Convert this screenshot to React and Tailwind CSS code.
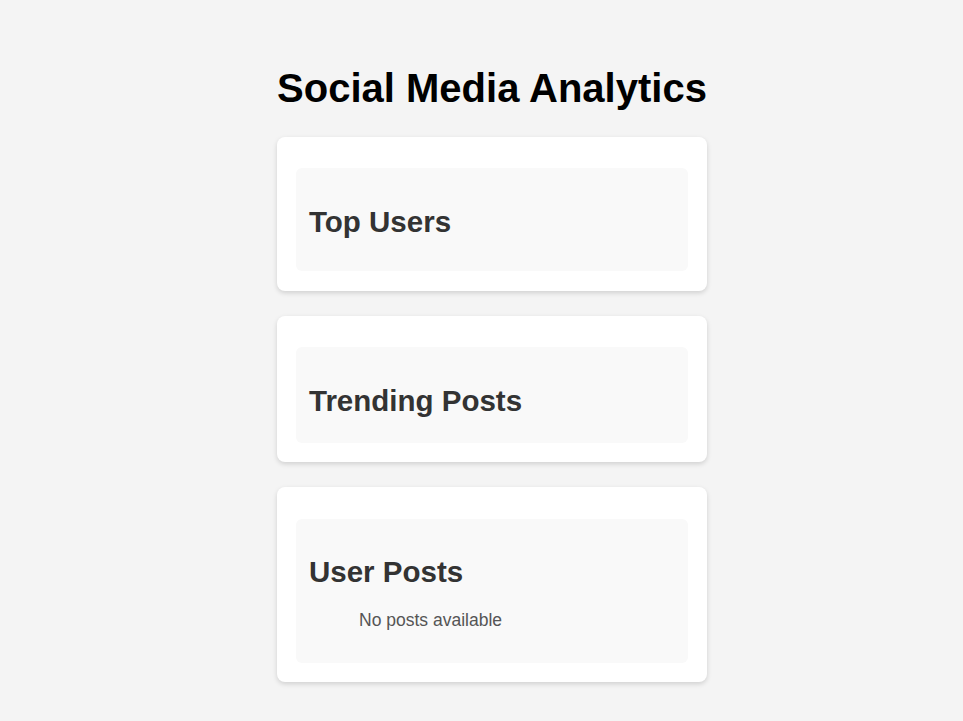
export default function App() {
  return (
    <div className="min-h-screen bg-[#f4f4f4] font-['Liberation_Sans',Arial,sans-serif]">
      <div className="flex justify-center pl-[21px] pt-[65px] pb-10">
        <div className="w-[430px]">
          <h1 className="text-center text-[40px] font-bold leading-[46px] text-black">
            Social Media Analytics
          </h1>

          <div className="mt-[26px] flex flex-col gap-[25px]">
            <section className="rounded-lg bg-white px-[19px] pt-[31px] pb-[20px] shadow-[0_2px_5px_rgba(0,0,0,0.15)]">
              <div className="rounded-md bg-[#f9f9f9] px-[13px] pt-[37px] pb-[32px]">
                <h2 className="text-[29.5px] font-bold leading-[34px] text-[#333]">Top Users</h2>
              </div>
            </section>

            <section className="rounded-lg bg-white px-[19px] pt-[31px] pb-[19px] shadow-[0_2px_5px_rgba(0,0,0,0.15)]">
              <div className="rounded-md bg-[#f9f9f9] px-[13px] pt-[37px] pb-[25px]">
                <h2 className="text-[29.5px] font-bold leading-[34px] text-[#333]">Trending Posts</h2>
              </div>
            </section>

            <section className="rounded-lg bg-white px-[19px] pt-[32px] pb-[19px] shadow-[0_2px_5px_rgba(0,0,0,0.15)]">
              <div className="rounded-md bg-[#f9f9f9] px-[13px] pt-[36px] pb-[33px]">
                <h2 className="text-[29.5px] font-bold leading-[34px] text-[#333]">User Posts</h2>
                <p className="mt-[21px] pl-[50px] text-[17.5px] leading-[20px] text-[#555]">No posts available</p>
              </div>
            </section>
          </div>
        </div>
      </div>
    </div>
  );
}
